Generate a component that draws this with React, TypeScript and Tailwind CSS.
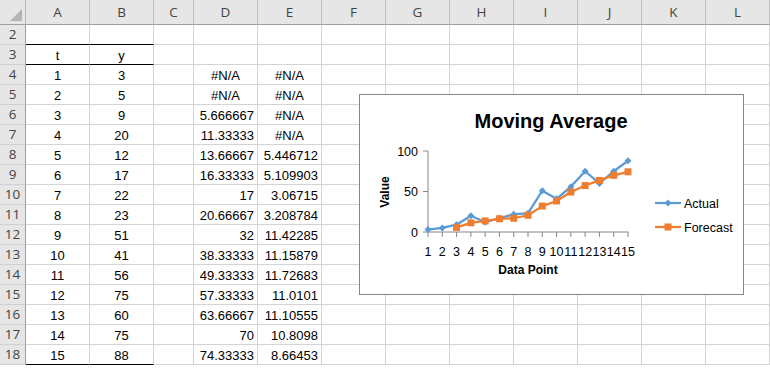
import React from 'react';

const columns = [
    { name: 'A', w: 'w-[64px]' },
    { name: 'B', w: 'w-[64px]' },
    { name: 'C', w: 'w-[40px]' },
    { name: 'D', w: 'w-[64px]' },
    { name: 'E', w: 'w-[64px]' },
    { name: 'F', w: 'w-[64px]' },
    { name: 'G', w: 'w-[64px]' },
    { name: 'H', w: 'w-[64px]' },
    { name: 'I', w: 'w-[64px]' },
    { name: 'J', w: 'w-[64px]' },
    { name: 'K', w: 'w-[64px]' },
    { name: 'L', w: 'w-[64px]' },
];

const actual = [3, 5, 9, 20, 12, 17, 22, 23, 51, 41, 56, 75, 60, 75, 88];
const dCol = ['#N/A', '#N/A', '5.666667', '11.33333', '13.66667', '16.33333', '17', '20.66667', '32', '38.33333', '49.33333', '57.33333', '63.66667', '70', '74.33333'];
const eCol = ['#N/A', '#N/A', '#N/A', '#N/A', '5.446712', '5.109903', '3.06715', '3.208784', '11.42285', '11.15879', '11.72683', '11.0101', '11.10555', '10.8098', '8.66453'];

// build rows 2..18
const rows: { n: number; cells: string[] }[] = [];
rows.push({ n: 2, cells: [] });
rows.push({ n: 3, cells: ['t', 'y'] });
for (let i = 0; i < 15; i++) {
    rows.push({ n: i + 4, cells: [String(i + 1), String(actual[i]), '', dCol[i], eCol[i]] });
}

function Cell({ col, row, text }: { col: number; row: number; text: string }) {
    const thick = (col === 0 || col === 1) && (row === 2 || row === 3 || row === 18);
    const isError = text.startsWith('#');
    const align =
        col <= 1 ? 'justify-center' : isError ? 'justify-center' : 'justify-end pr-[3px]';
    return (
        <div
            className={`${columns[col].w} h-[20px] shrink-0 flex items-center border-r border-b border-r-[#d4d4d4] ${
                thick ? 'border-b-black' : 'border-b-[#d4d4d4]'
            } ${align} text-[13px] text-black leading-none pt-[1px]`}
        >
            {text}
        </div>
    );
}

const xOf = (i: number) => 428 + (i - 1) * (200 / 14);
const yOf = (v: number) => 232 - v * 0.81;

function Chart() {
    const forecast = dCol.map((v, i) => ({ i: i + 1, v: parseFloat(v) })).filter((p) => !isNaN(p.v));
    const actualPts = actual.map((v, i) => `${xOf(i + 1)},${yOf(v)}`).join(' ');
    const forecastPts = forecast.map((p) => `${xOf(p.i)},${yOf(p.v)}`).join(' ');

    return (
        <div className="absolute left-[359px] top-[94px] w-[385px] h-[201px] border border-[#868686] bg-white">
            <svg width="383" height="199" className="block">
                <g transform="translate(-360,-95)" fontFamily="'Liberation Sans', Arial, sans-serif">
                    <text x="551" y="128" textAnchor="middle" fontSize="20" fontWeight="bold" fill="#000">
                        Moving Average
                    </text>

                    {/* axes */}
                    <line x1="428" y1="151" x2="428" y2="232" stroke="#868686" strokeWidth="1" />
                    <line x1="428" y1="232" x2="628.5" y2="232" stroke="#868686" strokeWidth="1" />
                    {[0, 50, 100].map((v) => (
                        <g key={v}>
                            <line x1="423" y1={yOf(v)} x2="428" y2={yOf(v)} stroke="#868686" />
                            <text x="418" y={yOf(v) + 4.5} textAnchor="end" fontSize="12.5" fill="#000">
                                {v}
                            </text>
                        </g>
                    ))}
                    {actual.map((_, i) => (
                        <g key={i}>
                            <line x1={xOf(i + 1)} y1="232" x2={xOf(i + 1)} y2="237" stroke="#868686" />
                            <text x={xOf(i + 1)} y="255.5" textAnchor="middle" fontSize="12.5" fill="#000">
                                {i + 1}
                            </text>
                        </g>
                    ))}

                    <text x="528" y="274" textAnchor="middle" fontSize="12" fontWeight="bold" fill="#000">
                        Data Point
                    </text>
                    <text
                        x="0"
                        y="0"
                        transform="translate(389,192) rotate(-90)"
                        textAnchor="middle"
                        fontSize="12"
                        fontWeight="bold"
                        fill="#000"
                    >
                        Value
                    </text>

                    {/* Actual series */}
                    <polyline points={actualPts} fill="none" stroke="#5B9BD5" strokeWidth="2.25" strokeLinejoin="round" />
                    {actual.map((v, i) => {
                        const x = xOf(i + 1);
                        const y = yOf(v);
                        return (
                            <polygon
                                key={i}
                                points={`${x},${y - 3.5} ${x + 3.5},${y} ${x},${y + 3.5} ${x - 3.5},${y}`}
                                fill="#5B9BD5"
                            />
                        );
                    })}

                    {/* Forecast series */}
                    <polyline points={forecastPts} fill="none" stroke="#ED7D31" strokeWidth="2.25" strokeLinejoin="round" />
                    {forecast.map((p) => (
                        <rect key={p.i} x={xOf(p.i) - 3.5} y={yOf(p.v) - 3.5} width="7" height="7" fill="#ED7D31" />
                    ))}

                    {/* Legend */}
                    <line x1="655" y1="203" x2="681" y2="203" stroke="#5B9BD5" strokeWidth="2.25" />
                    <polygon points="668,199.5 671.5,203 668,206.5 664.5,203" fill="#5B9BD5" />
                    <text x="684" y="207.5" fontSize="12.5" fill="#000">
                        Actual
                    </text>
                    <line x1="655" y1="227" x2="681" y2="227" stroke="#ED7D31" strokeWidth="2.25" />
                    <rect x="664.5" y="223.5" width="7" height="7" fill="#ED7D31" />
                    <text x="684" y="231.5" fontSize="12.5" fill="#000">
                        Forecast
                    </text>
                </g>
            </svg>
        </div>
    );
}

export default function App() {
    return (
        <div className="relative w-[770px] h-[368px] overflow-hidden bg-white font-['Liberation_Sans',Arial,sans-serif]">
            {/* Column headers */}
            <div className="flex h-[25px]">
                <div className="w-[26px] h-[25px] shrink-0 bg-[#e6e6e6] border-r border-b border-r-[#b8b8b8] border-b-[#9e9e9e] relative">
                    <svg width="25" height="24" className="absolute left-0 top-0">
                        <polygon points="22,9 22,21 10,21" fill="#b4b4b4" />
                    </svg>
                </div>
                {columns.map((c) => (
                    <div
                        key={c.name}
                        className={`${c.w} h-[25px] shrink-0 bg-[#e6e6e6] border-r border-b border-r-[#bdbdbd] border-b-[#9e9e9e] flex items-center justify-center text-[13.5px] text-[#444] font-['Open_Sans',sans-serif]`}
                    >
                        {c.name}
                    </div>
                ))}
            </div>

            {/* Rows */}
            {rows.map((r) => (
                <div key={r.n} className="flex h-[20px]">
                    <div className="w-[26px] h-[20px] shrink-0 bg-[#e6e6e6] border-r border-b border-r-[#9e9e9e] border-b-[#d0d0d0] flex items-center justify-center text-[13.5px] text-[#444] font-['Open_Sans',sans-serif]">
                        {r.n}
                    </div>
                    {columns.map((c, ci) => (
                        <Cell key={c.name} col={ci} row={r.n} text={r.cells[ci] ?? ''} />
                    ))}
                </div>
            ))}

            <Chart />
        </div>
    );
}
